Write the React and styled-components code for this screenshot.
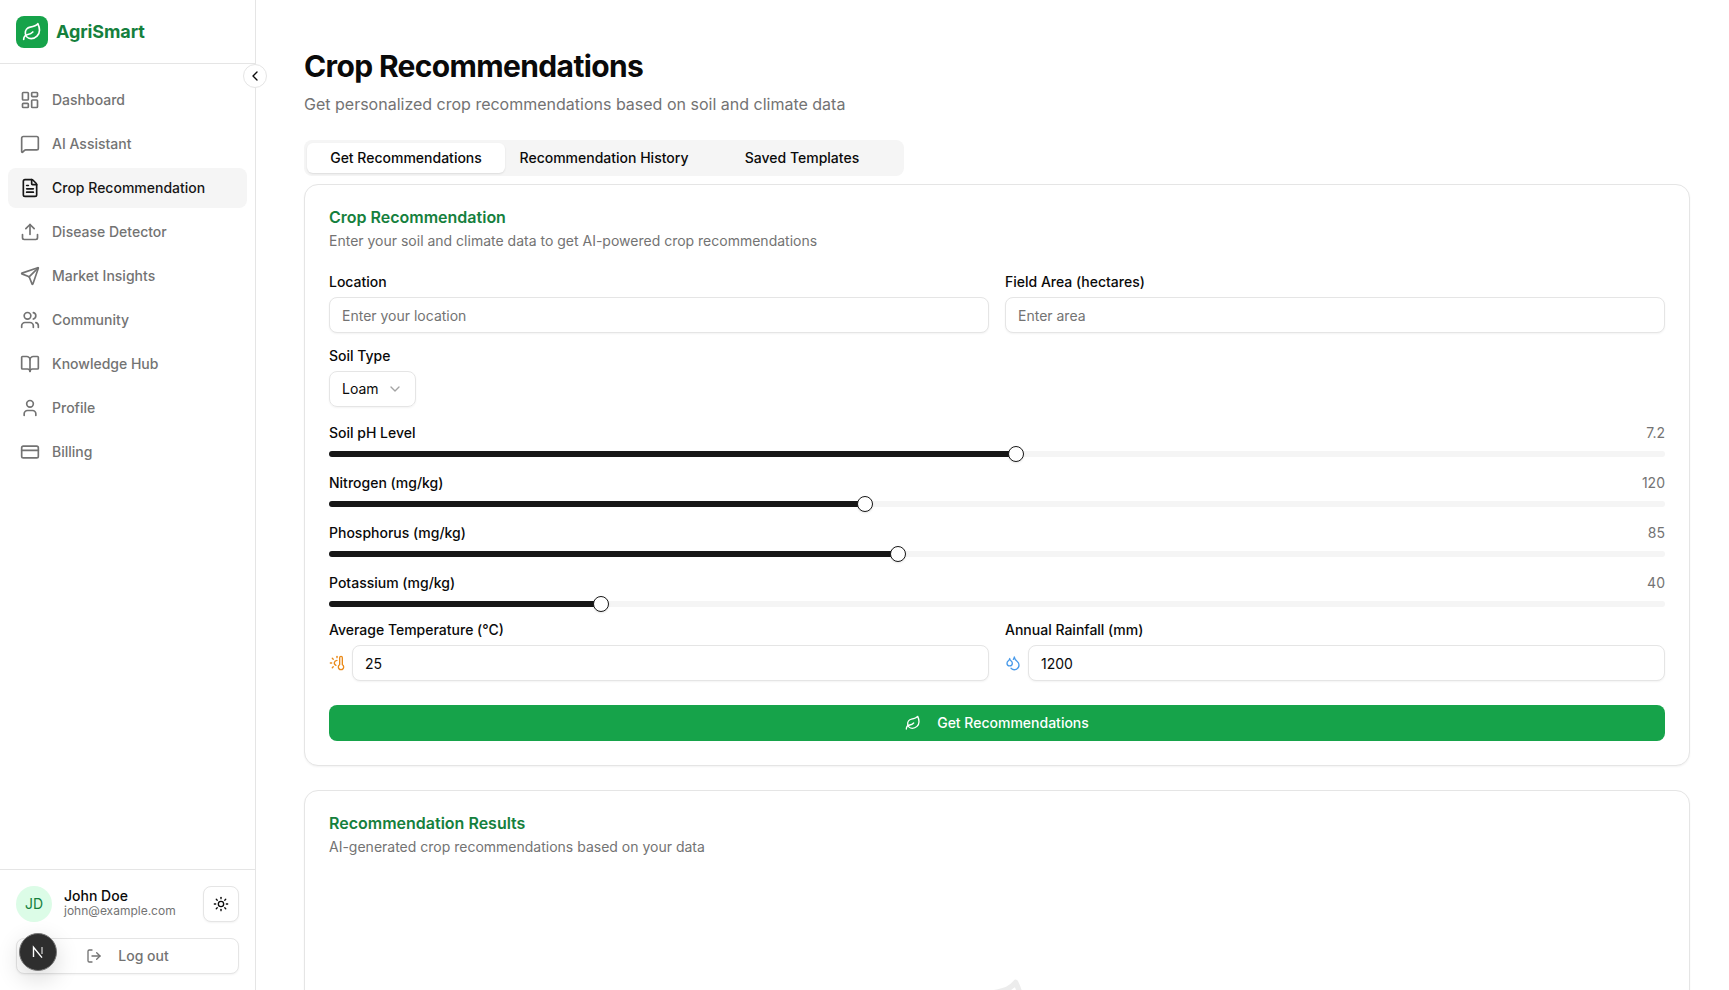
import React from 'react';
import styled, { createGlobalStyle } from 'styled-components';
import * as Slider from '@radix-ui/react-slider';
import {
  BookOpen,
  ChevronDown,
  ChevronLeft,
  CreditCard,
  Droplets,
  FileText,
  LayoutDashboard,
  Leaf,
  LogOut,
  MessageSquare,
  Send,
  Sun,
  ThermometerSun,
  Upload,
  User,
  Users,
} from 'lucide-react';

const GlobalStyle = createGlobalStyle`
  * { box-sizing: border-box; }
  html, body { margin: 0; height: 100%; overflow: hidden; background: #fff; }
  body {
    font-family: Inter, "Liberation Sans", sans-serif;
    color: #0a0a0a;
    font-size: 14px;
    line-height: 20px;
  }
`;

const navItems = [
  { label: 'Dashboard', icon: LayoutDashboard },
  { label: 'AI Assistant', icon: MessageSquare },
  { label: 'Crop Recommendation', icon: FileText, active: true },
  { label: 'Disease Detector', icon: Upload },
  { label: 'Market Insights', icon: Send },
  { label: 'Community', icon: Users },
  { label: 'Knowledge Hub', icon: BookOpen },
  { label: 'Profile', icon: User },
  { label: 'Billing', icon: CreditCard },
];

const sliders = [
  { label: 'Soil pH Level', value: 7.2, max: 14 },
  { label: 'Nitrogen (mg/kg)', value: 120, max: 300 },
  { label: 'Phosphorus (mg/kg)', value: 85, max: 200 },
  { label: 'Potassium (mg/kg)', value: 40, max: 200 },
];

const App = () => {
  return (
    <Layout>
      <GlobalStyle />
      <Sidebar>
        <Brand>
          <BrandMark>
            <Leaf size={20} color="#fff" />
          </BrandMark>
          <BrandName>AgriSmart</BrandName>
        </Brand>
        <CollapseButton>
          <ChevronLeft size={16} />
        </CollapseButton>
        <Nav>
          {navItems.map(({ label, icon: Icon, active }) => (
            <NavItem key={label} $active={active}>
              <Icon size={20} />
              {label}
            </NavItem>
          ))}
        </Nav>
        <SidebarFooter>
          <UserRow>
            <Avatar>JD</Avatar>
            <UserInfo>
              <UserName>John Doe</UserName>
              <UserEmail>john@example.com</UserEmail>
            </UserInfo>
            <ThemeButton>
              <Sun size={16} />
            </ThemeButton>
          </UserRow>
          <LogoutButton>
            <LogOut size={16} />
            Log out
          </LogoutButton>
        </SidebarFooter>
        <DevBadge>
          <svg width="16" height="16" viewBox="0 0 16 16" fill="none">
            <path d="M3.5 13V3.2L12 13.6" stroke="#fff" strokeWidth="1.4" />
            <path d="M12 3v7" stroke="#fff" strokeOpacity="0.7" strokeWidth="1.4" />
          </svg>
        </DevBadge>
      </Sidebar>

      <Main>
        <Title>Crop Recommendations</Title>
        <Subtitle>Get personalized crop recommendations based on soil and climate data</Subtitle>

        <Tabs>
          <Tab $active>Get Recommendations</Tab>
          <Tab>Recommendation History</Tab>
          <Tab>Saved Templates</Tab>
        </Tabs>

        <Card>
          <CardTitle>Crop Recommendation</CardTitle>
          <CardDescription>Enter your soil and climate data to get AI-powered crop recommendations</CardDescription>
          <Form>
            <TwoColumns>
              <Field>
                <Label>Location</Label>
                <Input placeholder="Enter your location" />
              </Field>
              <Field>
                <Label>Field Area (hectares)</Label>
                <Input placeholder="Enter area" />
              </Field>
            </TwoColumns>

            <Field>
              <Label>Soil Type</Label>
              <Select>
                Loam
                <ChevronDown size={16} />
              </Select>
            </Field>

            <SliderList>
              {sliders.map((s) => (
                <SliderBlock key={s.label}>
                  <SliderHead>
                    <Label>{s.label}</Label>
                    <SliderValue>{s.value}</SliderValue>
                  </SliderHead>
                  <SliderRoot value={[s.value]} max={s.max} step={0.1}>
                    <SliderTrack>
                      <SliderRange />
                    </SliderTrack>
                    <SliderThumb />
                  </SliderRoot>
                </SliderBlock>
              ))}

              <TwoColumns>
                <Field>
                  <Label>Average Temperature (°C)</Label>
                  <InputRow>
                    <ThermometerSun size={16} color="#ea8a1a" />
                    <Input defaultValue="25" />
                  </InputRow>
                </Field>
                <Field>
                  <Label>Annual Rainfall (mm)</Label>
                  <InputRow>
                    <Droplets size={16} color="#4a9bea" />
                    <Input defaultValue="1200" />
                  </InputRow>
                </Field>
              </TwoColumns>
            </SliderList>

            <SubmitButton>
              <Leaf size={16} />
              Get Recommendations
            </SubmitButton>
          </Form>
        </Card>

        <Card>
          <CardTitle>Recommendation Results</CardTitle>
          <CardDescription>AI-generated crop recommendations based on your data</CardDescription>
          <EmptyState>
            <Leaf size={64} />
          </EmptyState>
        </Card>
      </Main>
    </Layout>
  );
};

const Layout = styled.div`
  display: flex;
  height: 990px;
  overflow: hidden;
`;

const Sidebar = styled.aside`
  position: relative;
  flex: 0 0 256px;
  display: flex;
  flex-direction: column;
  border-right: 1px solid #e5e5e5;
`;

const Brand = styled.div`
  height: 64px;
  display: flex;
  align-items: center;
  gap: 8px;
  padding: 0 16px;
  border-bottom: 1px solid #e5e5e5;
`;

const BrandMark = styled.div`
  width: 32px;
  height: 32px;
  border-radius: 8px;
  background: #16a34a;
  display: flex;
  align-items: center;
  justify-content: center;
`;

const BrandName = styled.span`
  font-size: 18px;
  font-weight: 700;
  letter-spacing: -0.1px;
  color: #15803d;
`;

const CollapseButton = styled.button`
  position: absolute;
  top: 64px;
  right: -12px;
  width: 24px;
  height: 24px;
  padding: 0;
  border-radius: 50%;
  border: 1px solid #e5e5e5;
  background: #fff;
  color: #0a0a0a;
  display: flex;
  align-items: center;
  justify-content: center;
`;

const Nav = styled.nav`
  flex: 1;
  display: flex;
  flex-direction: column;
  gap: 4px;
  padding: 16px 8px;
`;

const NavItem = styled.a`
  height: 40px;
  display: flex;
  align-items: center;
  gap: 12px;
  padding: 0 12px;
  border-radius: 8px;
  font-size: 14px;
  line-height: 20px;
  font-weight: 500;
  color: ${(p) => (p.$active ? '#171717' : '#737373')};
  background: ${(p) => (p.$active ? '#f5f5f5' : 'transparent')};
`;

const SidebarFooter = styled.div`
  display: flex;
  flex-direction: column;
  gap: 16px;
  padding: 16px;
  border-top: 1px solid #e5e5e5;
`;

const UserRow = styled.div`
  display: flex;
  align-items: center;
  gap: 12px;
`;

const Avatar = styled.div`
  width: 36px;
  height: 36px;
  border-radius: 50%;
  background: #dcfce7;
  color: #15803d;
  display: flex;
  align-items: center;
  justify-content: center;
  font-size: 14px;
`;

const UserInfo = styled.div`
  flex: 1;
  padding-bottom: 2px;
`;

const UserName = styled.div`
  font-size: 14px;
  font-weight: 500;
  line-height: 16px;
`;

const UserEmail = styled.div`
  font-size: 12px;
  line-height: 14px;
  color: #737373;
`;

const ThemeButton = styled.button`
  width: 36px;
  height: 36px;
  padding: 0;
  border: 1px solid #e5e5e5;
  border-radius: 8px;
  background: #fff;
  color: #0a0a0a;
  display: flex;
  align-items: center;
  justify-content: center;
  box-shadow: 0 1px 2px rgba(0, 0, 0, 0.05);
`;

const LogoutButton = styled.button`
  height: 36px;
  border: 1px solid #e5e5e5;
  border-radius: 8px;
  background: #fff;
  color: #737373;
  font: 500 14px/20px Inter, sans-serif;
  display: flex;
  align-items: center;
  justify-content: center;
  gap: 16px;
  box-shadow: 0 1px 2px rgba(0, 0, 0, 0.05);
`;

const DevBadge = styled.div`
  position: absolute;
  left: 19px;
  bottom: 19px;
  width: 38px;
  height: 38px;
  border-radius: 50%;
  background: #2e2e2e;
  border: 1px solid #777;
  display: flex;
  align-items: center;
  justify-content: center;
  box-shadow: 0 8px 24px rgba(0, 0, 0, 0.16);
`;

const Main = styled.main`
  flex: 1;
  min-width: 0;
  padding: 48px 39px 0 48px;
`;

const Title = styled.h1`
  margin: 0;
  font-size: 30px;
  line-height: 36px;
  font-weight: 700;
  letter-spacing: -0.64px;
`;

const Subtitle = styled.p`
  margin: 8px 0 24px;
  font-size: 16px;
  line-height: 24px;
  color: #737373;
`;

const Tabs = styled.div`
  width: 600px;
  height: 36px;
  padding: 3px;
  border-radius: 8px;
  background: #f5f5f5;
  display: grid;
  grid-template-columns: repeat(3, 1fr);
  margin-bottom: 8px;
`;

const Tab = styled.div`
  display: flex;
  align-items: center;
  justify-content: center;
  border-radius: 6px;
  font-size: 14px;
  line-height: 20px;
  font-weight: 500;
  color: #0a0a0a;
  background: ${(p) => (p.$active ? '#fff' : 'transparent')};
  box-shadow: ${(p) => (p.$active ? '0 1px 2px rgba(0, 0, 0, 0.1)' : 'none')};
`;

const Card = styled.section`
  padding: 24px;
  border: 1px solid #e5e5e5;
  border-radius: 14px;
  background: #fff;
  box-shadow: 0 1px 2px rgba(0, 0, 0, 0.05);

  & + & {
    margin-top: 24px;
  }
`;

const CardTitle = styled.h2`
  margin: 0;
  font-size: 16px;
  line-height: 16px;
  font-weight: 600;
  color: #15803d;
`;

const CardDescription = styled.p`
  margin: 6px 0 0;
  font-size: 14px;
  line-height: 20px;
  color: #737373;
`;

const Form = styled.div`
  margin-top: 24px;
  display: flex;
  flex-direction: column;
  gap: 16px;
`;

const TwoColumns = styled.div`
  display: grid;
  grid-template-columns: 1fr 1fr;
  gap: 16px;
`;

const Field = styled.div`
  display: flex;
  flex-direction: column;
  align-items: stretch;
  gap: 8px;
`;

const Label = styled.label`
  font-size: 14px;
  line-height: 14px;
  font-weight: 500;
`;

const Input = styled.input`
  flex: none;
  width: 100%;
  height: 36px;
  padding: 0 12px;
  border: 1px solid #e5e5e5;
  border-radius: 8px;
  background: #fff;
  font: 14px/20px Inter, sans-serif;
  color: #0a0a0a;
  box-shadow: 0 1px 2px rgba(0, 0, 0, 0.05);

  &::placeholder {
    color: #737373;
  }
`;

const InputRow = styled.div`
  display: flex;
  align-items: center;
  gap: 7px;

  svg {
    flex: none;
  }

  ${Input} {
    flex: 1;
    min-width: 0;
  }
`;

const Select = styled.div`
  width: 87px;
  height: 36px;
  padding: 0 12px;
  border: 1px solid #e5e5e5;
  border-radius: 8px;
  display: flex;
  align-items: center;
  justify-content: space-between;
  font-size: 14px;
  box-shadow: 0 1px 2px rgba(0, 0, 0, 0.05);

  svg {
    color: #a3a3a3;
  }
`;

const SliderList = styled.div`
  display: flex;
  flex-direction: column;
  gap: 11px;
`;

const SliderBlock = styled.div`
  display: flex;
  flex-direction: column;
  gap: 3px;
`;

const SliderHead = styled.div`
  height: 20px;
  display: flex;
  align-items: center;
  justify-content: space-between;
`;

const SliderValue = styled.span`
  font-size: 14px;
  color: #737373;
`;

const SliderRoot = styled(Slider.Root)`
  position: relative;
  height: 16px;
  display: flex;
  align-items: center;
  width: 100%;
`;

const SliderTrack = styled(Slider.Track)`
  position: relative;
  flex: 1;
  height: 6px;
  border-radius: 999px;
  background: #f5f5f5;
  overflow: hidden;
`;

const SliderRange = styled(Slider.Range)`
  position: absolute;
  height: 100%;
  background: #171717;
`;

const SliderThumb = styled(Slider.Thumb)`
  display: block;
  width: 16px;
  height: 16px;
  border-radius: 50%;
  background: #fff;
  border: 1px solid #171717;
  box-shadow: 0 1px 2px rgba(0, 0, 0, 0.1);
`;

const SubmitButton = styled.button`
  margin-top: 8px;
  height: 36px;
  border: 0;
  border-radius: 8px;
  background: #16a34a;
  color: #fff;
  font: 500 14px/20px Inter, sans-serif;
  display: flex;
  align-items: center;
  justify-content: center;
  gap: 16px;
`;

const EmptyState = styled.div`
  display: flex;
  justify-content: center;
  padding-top: 120px;
  color: #ececec;
`;

export default App;
